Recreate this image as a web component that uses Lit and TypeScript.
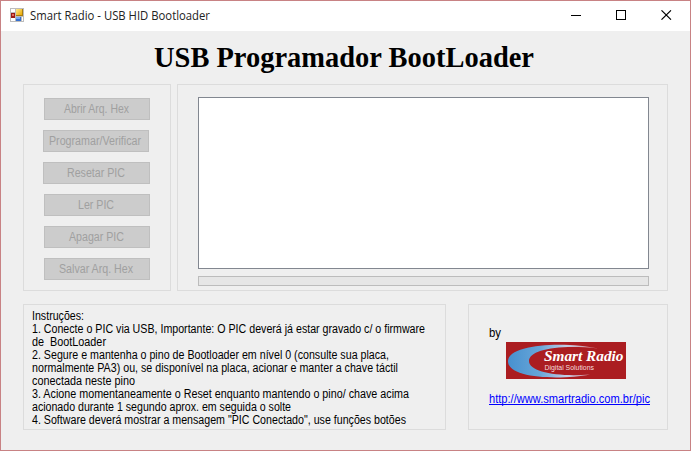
import { LitElement, html, svg, css } from "lit";
import { customElement, property } from "lit/decorators.js";

/** One line of label text set to an exact advance width. */
@customElement("text-line")
export class TextLine extends LitElement {
  static styles = css`
    :host { display: block; }
    svg { display: block; overflow: visible; }
    text { fill: currentColor; white-space: pre; }
  `;
  @property() text = "";
  @property({ type: Number }) width = 0;
  @property({ type: Number }) height = 13;
  @property({ type: Number }) baseline = 10;

  render() {
    return html`<svg width=${this.width} height=${this.height}>
      ${svg`<text x="0" y=${this.baseline} textLength=${this.width} lengthAdjust="spacingAndGlyphs">${this.text}</text>`}
    </svg>`;
  }
}

const BUTTONS = [
  { label: "Abrir Arq. Hex", kind: "", width: 65 },
  { label: "Programar/Verificar", kind: "shifted", width: 92 },
  { label: "Resetar PIC", kind: "wide", width: 58 },
  { label: "Ler PIC", kind: "", width: 36 },
  { label: "Apagar PIC", kind: "", width: 55 },
  { label: "Salvar Arq. Hex", kind: "", width: 74 },
];

const LINES: [string, number][] = [
  ["Instruções:", 52],
  ["1. Conecte o PIC via USB, Importante: O PIC deverá já estar gravado c/ o firmware", 393],
  ["de\u00a0 BootLoader", 74],
  ["2. Segure e mantenha o pino de Bootloader em nível 0 (consulte sua placa,", 357],
  ["normalmente PA3) ou, se disponível na placa, acionar e manter a chave táctil", 366],
  ["conectada neste pino", 103],
  ["3. Acione momentaneamente o Reset enquanto mantendo o pino/ chave acima", 377],
  ["acionado durante 1 segundo aprox. em seguida o solte", 259],
  ["4. Software deverá mostrar a mensagem \"PIC Conectado\", use funções botões", 374],
];

@customElement("app-root")
export class AppRoot extends LitElement {
  static styles = css`
    :host {
      display: block;
      box-sizing: border-box;
      width: 691px;
      height: 451px;
      border: 1px solid #c88284;
      background: #efefef;
      color: #000;
      font: 12px "Liberation Sans", Arial, sans-serif;
      overflow: hidden;
    }
    * { box-sizing: border-box; }
    .titlebar {
      display: flex;
      height: 30px;
      padding: 7px 18px 0 9px;
      background: #fff;
    }
    .app-icon { display: block; flex: none; }
    .caption {
      margin: 0 auto 0 6px;
      color: #222;
      font: 12px "Open Sans", "Noto Sans", sans-serif;
    }
    .controls { display: flex; gap: 35px; padding-top: 2px; }
    .controls svg { display: block; }
    .heading {
      height: 53px;
      padding: 0 0 0 153px;
      font: bold 29px "Liberation Serif", serif;
    }
    .row { display: flex; padding-left: 22px; }
    .row + .row { margin-top: 13px; }
    .group { flex: none; border: 1px solid #dcdcdc; }
    .actions {
      display: flex;
      flex-direction: column;
      gap: 10px;
      width: 148px;
      height: 207px;
      padding: 13px 0 0 20px;
    }
    .button {
      display: flex;
      justify-content: center;
      width: 106px;
      height: 22px;
      margin: 0;
      padding: 4px 2px 0 0;
      border: 1px solid #bfbfbf;
      border-radius: 0;
      background: #ccc;
      color: #a0a0a0;
      font: inherit;
    }
    .button.shifted { margin-left: -1px; }
    .button.wide { margin-left: -1px; width: 107px; }
    .output {
      width: 491px;
      height: 207px;
      margin-left: 6px;
      padding: 12px 0 0 20px;
    }
    .log { width: 451px; height: 172px; border: 1px solid #828790; background: #fff; }
    .progress { width: 451px; height: 10px; margin-top: 7px; border: 1px solid #bcbcbc; background: #e6e6e6; }
    .help { width: 423px; height: 126px; padding: 5px 0 0 8px; }
    .credits { width: 200px; height: 126px; margin-left: 22px; padding: 22px 0 0 20px; }
    .logo { display: block; margin: 2px 0 15px 17px; }
    .brand { font: italic bold 15px "Liberation Serif", serif; fill: #fff; }
    .tagline { font: 7.8px "Liberation Sans", sans-serif; fill: #f4dcdc; }
    .link { display: block; width: 161px; height: 11px; border-bottom: 1px solid #00f; color: #00f; text-decoration: none; }
  `;

  private renderLogo() {
    return html`<svg class="logo" width="120" height="37" viewBox="0 0 120 37">
      <defs>
        <linearGradient id="swoosh" x1="0" x2="1">
          <stop offset="0" stop-color="#4791cf"></stop>
          <stop offset=".35" stop-color="#67a5d8"></stop>
          <stop offset=".65" stop-color="#c3cfe6"></stop>
          <stop offset="1" stop-color="#d87e83"></stop>
        </linearGradient>
      </defs>
      <rect width="120" height="37" fill="#ab1d21"></rect>
      <path d="M92 6.5C62-.5 2 1 2 19.3C2 37 56 38 84 32.5C51 35 23 30 23 19C23 8 52 2 92 6.5Z" fill="url(#swoosh)"></path>
      <text class="brand" x="38" y="19" textLength="79.5" lengthAdjust="spacingAndGlyphs">Smart Radio</text>
      <text class="tagline" x="38.5" y="28" textLength="49.5" lengthAdjust="spacingAndGlyphs">Digital Solutions</text>
    </svg>`;
  }

  render() {
    return html`
      <div class="titlebar">
        <svg class="app-icon" width="14" height="14" viewBox="0 0 14 14" shape-rendering="crispEdges">
          <defs>
            <linearGradient id="gold" x1="0" y1="0" x2="1" y2="1">
              <stop offset="0" stop-color="#ffeb91"></stop><stop offset="1" stop-color="#eaa800"></stop>
            </linearGradient>
          </defs>
          <path d="M0 0H14V14H0Z" fill="#bcbcbc"></path>
          <path d="M1 1H5V4H1ZM1 10H5V13H1ZM12 9H13V13H12Z" fill="#fff"></path>
          <rect x="6" y="1" width="7" height="7" fill="#a77d10"></rect>
          <rect x="6" y="1" width="6" height="6" fill="url(#gold)"></rect>
          <rect x="1" y="5" width="4" height="5" fill="#9b1b15"></rect>
          <rect x="2" y="6" width="2" height="2" fill="#e56b5d"></rect>
          <rect x="6" y="9" width="5" height="4" fill="#356fd0"></rect>
          <rect x="6" y="9" width="4" height="2" fill="#79a9ef"></rect>
        </svg>
        <text-line class="caption" text="Smart Radio - USB HID Bootloader" .width=${180} .height=${16} .baseline=${12}></text-line>
        <div class="controls">
          <svg width="10" height="10"><rect y="5" width="10" height="1"></rect></svg>
          <svg width="10" height="10"><rect x=".5" y=".5" width="9" height="9" fill="none" stroke="#000"></rect></svg>
          <svg width="11" height="10"><path d="M.5 .3L10 9.7M10 .3L.5 9.7" stroke="#000" stroke-width="1.1"></path></svg>
        </div>
      </div>
      <text-line class="heading" text="USB Programador BootLoader" .width=${380} .height=${53} .baseline=${36}></text-line>
      <div class="row">
        <div class="group actions">
          ${BUTTONS.map((b) => html`<button class="button ${b.kind}" disabled>
            <text-line .text=${b.label} .width=${b.width}></text-line>
          </button>`)}
        </div>
        <div class="group output">
          <div class="log"></div>
          <div class="progress"></div>
        </div>
      </div>
      <div class="row">
        <div class="group help">
          ${LINES.map(([text, width]) => html`<text-line .text=${text} .width=${width}></text-line>`)}
        </div>
        <div class="group credits">
          <text-line text="by" .width=${12}></text-line>
          ${this.renderLogo()}
          <a class="link"><text-line text="http://www.smartradio.com.br/pic" .width=${161} .height=${10} .baseline=${9}></text-line></a>
        </div>
      </div>
    `;
  }
}
